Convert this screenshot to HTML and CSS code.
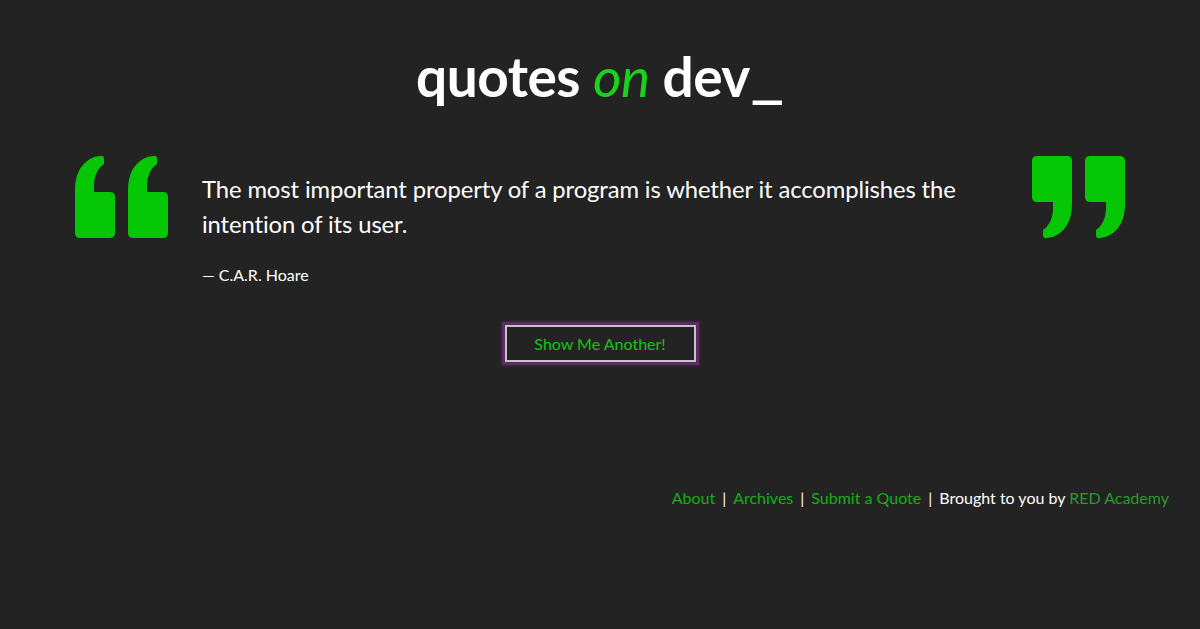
FILE: index.html
```html
<!DOCTYPE html>
<html lang="en">
<head>
<meta charset="utf-8">
<title>quotes on dev</title>
<link rel="stylesheet" href="styles.css">
</head>
<body>
<div class="page">
  <header class="site-header">
    <h1 class="site-title">quotes <span class="accent">on</span> dev<span class="cursor">_</span></h1>
  </header>
  <main class="quote-area">
    <div class="quote-row">
      <svg class="mark mark-open" viewBox="0 0 94 82" width="94" height="82" aria-hidden="true">
        <g fill="#05c705">
          <path d="M5 82 Q0 82 0 77 L0 34 Q0 12 15 3 Q20 0 25 0 L27 0 Q29 0 29 3 L29 8 Q20 14 19 28 L19 36 L35 36 Q40 36 40 41 L40 77 Q40 82 35 82 Z"/>
          <path d="M5 82 Q0 82 0 77 L0 34 Q0 12 15 3 Q20 0 25 0 L27 0 Q29 0 29 3 L29 8 Q20 14 19 28 L19 36 L35 36 Q40 36 40 41 L40 77 Q40 82 35 82 Z" transform="translate(53 0)"/>
        </g>
      </svg>
      <blockquote class="quote">
        <p class="quote-text">The most important property of a program is whether it accomplishes the intention of its user.</p>
        <p class="quote-author">— C.A.R. Hoare</p>
      </blockquote>
      <svg class="mark mark-close" viewBox="0 0 94 82" width="94" height="82" aria-hidden="true">
        <g fill="#05c705" transform="rotate(180 47 41)">
          <path d="M5 82 Q0 82 0 77 L0 34 Q0 12 15 3 Q20 0 25 0 L27 0 Q29 0 29 3 L29 8 Q20 14 19 28 L19 36 L35 36 Q40 36 40 41 L40 77 Q40 82 35 82 Z"/>
          <path d="M5 82 Q0 82 0 77 L0 34 Q0 12 15 3 Q20 0 25 0 L27 0 Q29 0 29 3 L29 8 Q20 14 19 28 L19 36 L35 36 Q40 36 40 41 L40 77 Q40 82 35 82 Z" transform="translate(53 0)"/>
        </g>
      </svg>
    </div>
    <div class="actions">
      <button class="another-btn" type="button">Show Me Another!</button>
    </div>
  </main>
  <footer class="site-footer">
    <nav class="footer-nav"><a href="#" class="flink">About</a><span class="sep">|</span><a href="#" class="flink">Archives</a><span class="sep">|</span><a href="#" class="flink">Submit a Quote</a><span class="sep">|</span><span class="credit">Brought to you by <a href="#" class="flink red">RED Academy</a></span></nav>
  </footer>
</div>
</body>
</html>
```

FILE: styles.css
```css
html, body {
  margin: 0;
  padding: 0;
  background: #232323;
}
body {
  font-family: "Lato", "Open Sans", sans-serif;
  color: #ffffff;
  height: 629px;
  overflow: hidden;
}
.page {
  display: flex;
  flex-direction: column;
}
.site-header {
  display: flex;
  justify-content: center;
  padding-top: 41px;
}
.site-title {
  margin: 0;
  font-size: 55px;
  line-height: 70px;
  font-weight: 700;
  letter-spacing: -0.5px;
  color: #ffffff;
}
.accent {
  color: #1bd21b;
  font-style: italic;
  font-weight: 400;
}
.cursor {
  display: inline-block;
  margin-left: 0;
  margin-right: 9px;
  transform: scaleX(1.35);
  transform-origin: left center;
}
.quote-area {
  display: flex;
  flex-direction: column;
  padding-top: 45px;
}
.quote-row {
  display: flex;
  justify-content: space-between;
  align-items: flex-start;
  padding: 0 75px;
}
.mark {
  flex: none;
  display: block;
}
.quote {
  margin: 0;
  flex: 1;
  padding: 16px 20px 0 33px;
}
.quote-text {
  margin: 0;
  font-size: 23.8px;
  line-height: 35px;
  letter-spacing: -0.1px;
  color: #ffffff;
  max-width: 790px;
}
.quote-author {
  margin: 23px 0 0;
  font-size: 16px;
  line-height: 20px;
  color: #ffffff;
}
.actions {
  display: flex;
  justify-content: center;
  padding-top: 40px;
}
.another-btn {
  font-family: inherit;
  font-size: 16px;
  color: #16c316;
  background: #232323;
  border: 2px solid #c9bfcf;
  box-shadow: 0 0 0 3px #5a2c62, 0 0 2px 4px rgba(90, 44, 98, 0.5);
  width: 191px;
  height: 37px;
  padding: 0;
  cursor: pointer;
}
.site-footer {
  display: flex;
  justify-content: flex-end;
  padding: 126px 31px 0 0;
}
.footer-nav {
  font-size: 16px;
  line-height: 20px;
  color: #ffffff;
}
.flink {
  color: #14b014;
  text-decoration: none;
}
.flink.red {
  color: #2a9a2a;
}
.sep {
  margin: 0 7px;
  color: #ffffff;
}
.credit {
  color: #ffffff;
}
```
